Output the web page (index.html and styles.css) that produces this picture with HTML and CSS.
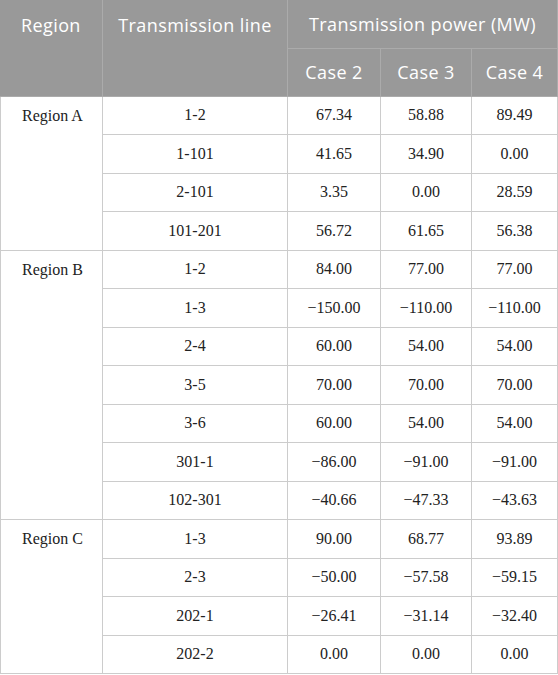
FILE: index.html
```html
<!DOCTYPE html>
<html>
<head>
<meta charset="utf-8">
<link rel="stylesheet" href="styles.css">
</head>
<body>
<table class="tbl">
  <colgroup>
    <col class="c1"><col class="c2"><col class="c3"><col class="c4"><col class="c5">
  </colgroup>
  <thead>
    <tr class="h1">
      <th rowspan="2" class="left top">Region</th>
      <th rowspan="2" class="top">Transmission line</th>
      <th colspan="3">Transmission power (MW)</th>
    </tr>
    <tr class="h2">
      <th>Case 2</th><th>Case 3</th><th>Case 4</th>
    </tr>
  </thead>
  <tbody>
    <tr><td rowspan="4" class="region">Region A</td><td>1-2</td><td>67.34</td><td>58.88</td><td>89.49</td></tr>
    <tr><td>1-101</td><td>41.65</td><td>34.90</td><td>0.00</td></tr>
    <tr><td>2-101</td><td>3.35</td><td>0.00</td><td>28.59</td></tr>
    <tr><td>101-201</td><td>56.72</td><td>61.65</td><td>56.38</td></tr>
    <tr><td rowspan="7" class="region">Region B</td><td>1-2</td><td>84.00</td><td>77.00</td><td>77.00</td></tr>
    <tr><td>1-3</td><td>−150.00</td><td>−110.00</td><td>−110.00</td></tr>
    <tr><td>2-4</td><td>60.00</td><td>54.00</td><td>54.00</td></tr>
    <tr><td>3-5</td><td>70.00</td><td>70.00</td><td>70.00</td></tr>
    <tr><td>3-6</td><td>60.00</td><td>54.00</td><td>54.00</td></tr>
    <tr><td>301-1</td><td>−86.00</td><td>−91.00</td><td>−91.00</td></tr>
    <tr><td>102-301</td><td>−40.66</td><td>−47.33</td><td>−43.63</td></tr>
    <tr><td rowspan="4" class="region">Region C</td><td>1-3</td><td>90.00</td><td>68.77</td><td>93.89</td></tr>
    <tr><td>2-3</td><td>−50.00</td><td>−57.58</td><td>−59.15</td></tr>
    <tr><td>202-1</td><td>−26.41</td><td>−31.14</td><td>−32.40</td></tr>
    <tr><td>202-2</td><td>0.00</td><td>0.00</td><td>0.00</td></tr>
  </tbody>
</table>
</body>
</html>
```

FILE: styles.css
```css
html, body {
  margin: 0;
  padding: 0;
  background: #ffffff;
}
.tbl {
  width: 557px;
  border-collapse: collapse;
  table-layout: fixed;
}
.c1 { width: 102px; }
.c2 { width: 185px; }
.c3 { width: 93px; }
.c4 { width: 91px; }
.c5 { width: 86px; }
.tbl th {
  background: #999999;
  color: #ffffff;
  font-family: "Open Sans", "Noto Sans", sans-serif;
  font-weight: normal;
  font-size: 18px;
  letter-spacing: 0.4px;
  line-height: 24px;
  height: 48px;
  padding: 0;
  text-align: center;
  vertical-align: middle;
  border: 1px solid #ababab;
  box-sizing: border-box;
}
.tbl th.top {
  vertical-align: top;
  padding-top: 13px;
}
.tbl th.left {
  text-align: left;
  padding-left: 20px;
}
.tbl thead tr:first-child th {
  border-top: none;
}
.tbl th:first-child {
  border-left: 1px solid #999999;
}
.tbl td {
  font-family: "Liberation Serif", "Times New Roman", serif;
  font-size: 16px;
  color: #222222;
  height: 38.5px;
  padding: 0;
  text-align: center;
  vertical-align: middle;
  border: 1px solid #cccccc;
  box-sizing: border-box;
}
.tbl td.region {
  text-align: left;
  vertical-align: top;
  padding-left: 21px;
  padding-top: 10px;
}
```
